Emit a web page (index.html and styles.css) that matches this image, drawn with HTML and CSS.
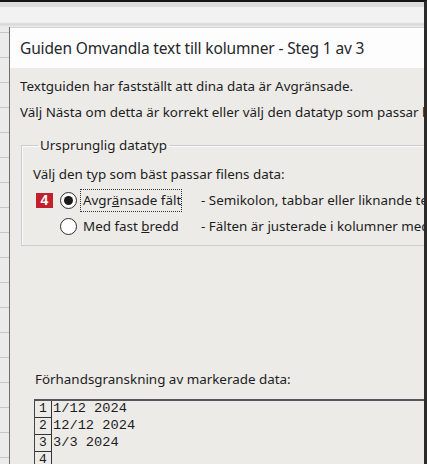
FILE: index.html
```html
<!DOCTYPE html>
<html lang="sv">
<head>
  <meta charset="UTF-8" />
  <meta name="viewport" content="width=device-width, initial-scale=1.0" />
  <title>Guiden Omvandla text till kolumner</title>
  <link rel="stylesheet" href="styles.css">
</head>
<body>
  <div class="screen">
    <div class="ribbon"></div>
    <div class="workarea">
      <div class="sheet"></div>

      <div class="dialog">
        <div class="title">Guiden Omvandla text till kolumner - Steg 1 av 3</div>

        <div class="content">
          <p class="intro">Textguiden har fastställt att dina data är Avgränsade.</p>
          <p class="intro second">Välj Nästa om detta är korrekt eller välj den datatyp som passar bäst för dina data.</p>

          <fieldset class="group">
            <legend>Ursprunglig datatyp</legend>
            <p class="prompt">Välj den typ som bäst passar filens data:</p>

            <div class="option">
              <span class="badge">4</span>
              <span class="radio checked"></span>
              <span class="label focus">Avgr<u>ä</u>nsade fält</span>
              <span class="desc">- Semikolon, tabbar eller liknande tecken avgränsar fälten.</span>
            </div>
            <div class="option">
              <span class="badge-space"></span>
              <span class="radio"></span>
              <span class="label">Med fast <u>b</u>redd</span>
              <span class="desc">- Fälten är justerade i kolumner med blanksteg mellan fälten.</span>
            </div>
          </fieldset>

          <p class="preview-label">Förhandsgranskning av markerade data:</p>

          <div class="preview">
            <div class="row"><span class="num">1</span><span class="cell">1/12 2024</span></div>
            <div class="row"><span class="num">2</span><span class="cell">12/12 2024</span></div>
            <div class="row"><span class="num">3</span><span class="cell">3/3 2024</span></div>
            <div class="row"><span class="num">4</span><span class="cell"></span></div>
          </div>
        </div>
      </div>
    </div>
  </div>
</body>
</html>
```

FILE: styles.css
```css
body {
  margin: 0;
  overflow: hidden;
  font-family: "Noto Sans", "Open Sans", sans-serif;
  color: #1d1d22;
}
.screen {
  width: 427px;
  height: 464px;
  box-sizing: border-box;
  border-top: 2px solid #151515;
  border-right: 3px solid #2b2b2b;
  background: #e9e9e9;
  display: flex;
  flex-direction: column;
  overflow: hidden;
}
.ribbon {
  height: 25px;
  flex: none;
  background: linear-gradient(to bottom, #dcdcdc 0, #dcdcdc 5px, #f2f2f2 5px, #f2f2f2 20px, #d6d6d6 22px, #ececec 25px);
}
.workarea {
  flex: 1;
  display: flex;
  min-height: 0;
}
.sheet {
  width: 9px;
  flex: none;
  background: repeating-linear-gradient(to bottom, #ebebeb 0, #ebebeb 5px, #c6c6c6 5px, #c6c6c6 6px, #ebebeb 6px, #ebebeb 25px);
}
.dialog {
  flex: 1;
  min-width: 0;
  border-left: 1px solid #6f6f6f;
  background: #ecebe8;
  white-space: nowrap;
  overflow: hidden;
}
.title {
  height: 41px;
  box-sizing: border-box;
  border-top: 1px solid #d4d4d4;
  background: #fdfdfd;
  padding-left: 10px;
  font-size: 15.5px;
  letter-spacing: -0.15px;
  line-height: 40px;
  color: #26272c;
}
.content {
  padding: 9px 0 0 10px;
  font-size: 13.4px;
  line-height: 19px;
}
p {
  margin: 0;
}
.second {
  margin-top: 7px;
}
.group {
  margin: 14px 0 0 1px;
  width: 520px;
  height: 108px;
  box-sizing: content-box;
  padding: 0 0 0 11px;
  border: 1px solid #cfcdca;
  box-shadow: inset 1px 1px 0 #fafafa;
}
.group legend {
  padding: 0 2px;
  margin-left: 5px;
}
.prompt {
  margin: 10px 0 3px;
}
.option {
  display: flex;
  align-items: center;
  height: 26px;
}
.badge,
.badge-space {
  width: 17px;
  height: 15px;
  margin-left: 3px;
  flex: none;
}
.badge {
  background: #c3202d;
  color: #fff;
  font-family: "Liberation Sans", Arial, sans-serif;
  font-weight: bold;
  font-size: 14px;
  line-height: 15px;
  text-align: center;
}
.radio {
  width: 15px;
  height: 15px;
  margin-left: 7px;
  flex: none;
  border: 1px solid #2d2d2d;
  border-radius: 50%;
  background: #fff;
  position: relative;
}
.radio.checked::after {
  content: "";
  position: absolute;
  left: 3px;
  top: 3px;
  width: 9px;
  height: 9px;
  border-radius: 50%;
  background: #1b1b1b;
}
.label {
  width: 102px;
  margin-left: 3px;
  padding: 1px 0 1px 2px;
  box-sizing: border-box;
  border: 1px dotted transparent;
  flex: none;
}
.label.focus {
  border-color: #333;
}
.desc {
  margin-left: 19px;
}
.preview-label {
  margin: 124px 0 0 15px;
}
.preview {
  margin: 10px 0 0 14px;
  width: 520px;
  border-top: 2px solid #555;
  border-left: 1px solid #444;
  font-family: "Liberation Mono", "Courier New", monospace;
  font-size: 13.7px;
}
.row {
  display: flex;
  height: 17px;
  line-height: 16px;
}
.num {
  width: 17px;
  box-sizing: border-box;
  border-right: 1px solid #333;
  border-bottom: 1px solid #333;
  text-align: center;
  flex: none;
  font-size: 13px;
}
.cell {
  padding-left: 1px;
}
```
